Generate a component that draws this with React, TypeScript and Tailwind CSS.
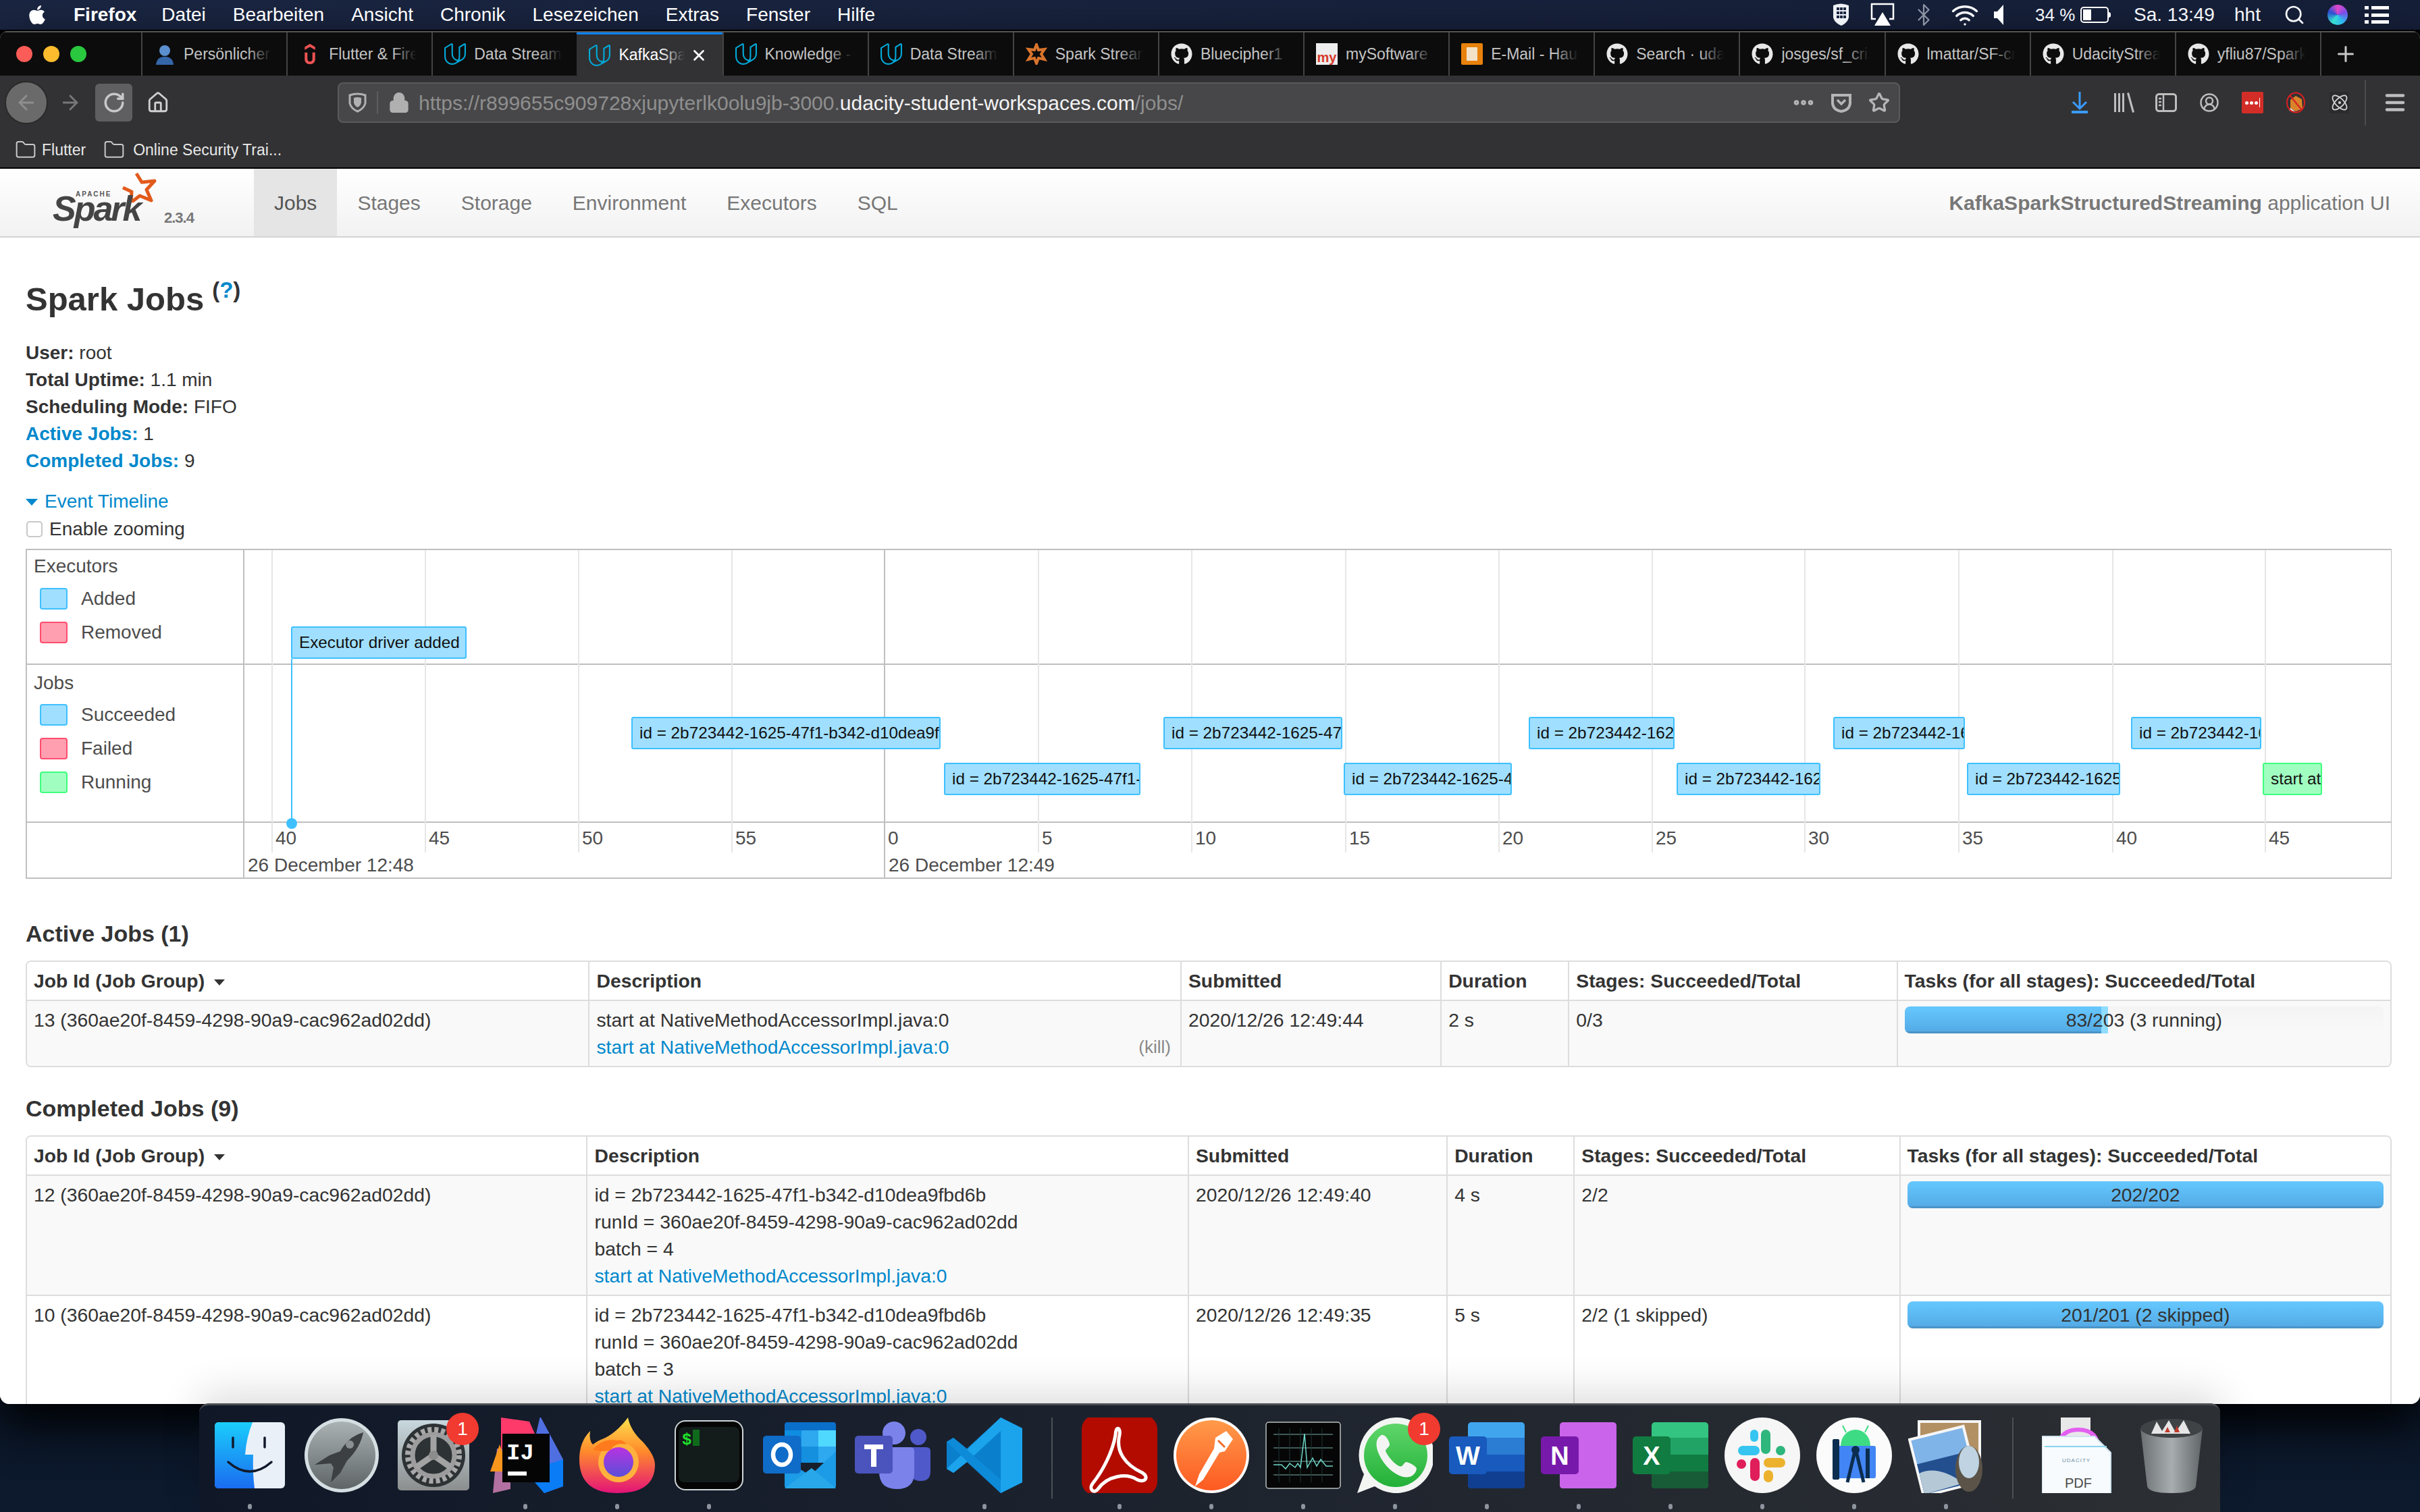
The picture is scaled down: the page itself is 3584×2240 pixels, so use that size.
import { ReactNode } from 'react'
import {
  ArrowLeft,
  ArrowRight,
  Atom,
  Bluetooth,
  CircleUserRound,
  Ellipsis,
  Folder,
  Home,
  Lock,
  Menu,
  Plus,
  RotateCw,
  Search,
  Star,
  Wifi,
  X,
} from 'lucide-react'
import { FaApple, FaGithub } from 'react-icons/fa'
import { SiUdacity, SiUdemy } from 'react-icons/si'

const sans = "font-['Liberation_Sans',Arial,sans-serif]"

const menus = ['Datei', 'Bearbeiten', 'Ansicht', 'Chronik', 'Lesezeichen', 'Extras', 'Fenster', 'Hilfe']

function Favicon({ kind }: { kind: string }) {
  if (kind === 'udacity') return <SiUdacity size={32} className="text-[#02a9d8]" />
  if (kind === 'github') return <FaGithub size={32} className="text-[#e8e8e8]" />
  if (kind === 'udemy') return <SiUdemy size={30} className="text-[#ec5252]" />
  if (kind === 'person')
    return (
      <svg viewBox="0 0 32 32" className="h-8 w-8">
        <circle cx="16" cy="11" r="8" fill="#5b8fd0" />
        <path d="M3 32c1-10 7-12 13-12s12 2 13 12z" fill="#3566a8" />
      </svg>
    )
  if (kind === 'spark')
    return (
      <svg viewBox="0 0 32 32" className="h-8 w-8">
        <path d="M16 2l3 8 9-1-5 7 5 8-9-2-3 8-3-8-9 2 5-8-5-7 9 1z" fill="none" stroke="#d9742c" strokeWidth="4" />
      </svg>
    )
  if (kind === 'my')
    return (
      <div className="flex h-8 w-8 flex-col items-center justify-end bg-[#eeeeee] text-[20px] leading-[22px] font-bold text-[#d63a2a]">
        my
      </div>
    )
  return (
    <div className="flex h-8 w-8 items-center justify-center rounded-[2px] bg-[#e8820c]">
      <div className="h-5 w-4 bg-[#f3e2c8]" />
    </div>
  )
}

const tabs = [
  { kind: 'person', label: 'Persönlicher Bereich' },
  { kind: 'udemy', label: 'Flutter & Firebase' },
  { kind: 'udacity', label: 'Data Streaming' },
  { kind: 'udacity', label: 'KafkaSpark', active: true },
  { kind: 'udacity', label: 'Knowledge - Udacity' },
  { kind: 'udacity', label: 'Data Streaming' },
  { kind: 'spark', label: 'Spark Streaming' },
  { kind: 'github', label: 'Bluecipher1 (Blue' },
  { kind: 'my', label: 'mySoftware' },
  { kind: 'mail', label: 'E-Mail - Hauptkonto' },
  { kind: 'github', label: 'Search · udacity' },
  { kind: 'github', label: 'josges/sf_crime' },
  { kind: 'github', label: 'lmattar/SF-crime' },
  { kind: 'github', label: 'UdacityStreaming' },
  { kind: 'github', label: 'yfliu87/Spark' },
]

function MenuBar() {
  return (
    <div className={`flex h-[44px] items-center bg-gradient-to-r from-[#1a2541] to-[#151f38] text-[28px] text-white ${sans}`}>
      <FaApple size={32} className="ml-[39px]" />
      <span className="ml-[38px] font-bold">Firefox</span>
      <div className="ml-[37px] flex gap-[40px]">
        {menus.map((m) => (
          <span key={m}>{m}</span>
        ))}
      </div>
      <div className="ml-auto flex items-center pr-[46px] text-[#f4f6fa]">
        <svg viewBox="0 0 29 34" className="h-[34px] w-[29px]">
          <path d="M3 3q11-5 23 0v18q-2 8-11 12-10-4-12-12z" fill="#eef1f6" />
          <path d="M8 6h4v4H8zm5 0h4v4h-4zm5 0h4v4h-4zM8 12h4v4H8zm5 0h4v4h-4zm5 0h4v4h-4zM8 18h4v4H8zm5 0h4v4h-4zm5 0h4v4h-4z" fill="#1a2541" />
        </svg>
        <svg viewBox="0 0 36 36" className="ml-[29px] h-[36px] w-[36px]" fill="none">
          <path d="M8 24H2V2h32v22h-6" stroke="#fff" strokeWidth="2.5" />
          <path d="M18 14l12 20H6z" fill="#fff" />
        </svg>
        <Bluetooth size={36} strokeWidth={1.5} className="ml-[25px] text-[#8d93a3]" />
        <Wifi size={42} strokeWidth={2} className="ml-[22px]" />
        <svg viewBox="0 0 14 30" className="ml-[22px] h-[30px] w-[14px]">
          <path d="M0 10h5l9-10v30L5 20H0z" fill="#fff" />
        </svg>
        <span className="ml-[47px] w-[56px] whitespace-nowrap text-[26px]">34 %</span>
        <div className="ml-[11px] flex h-[24px] w-[42px] items-center rounded-[5px] border-2 border-white p-[2px]">
          <div className="h-full w-[12px] bg-white" />
        </div>
        <div className="h-[8px] w-[3px] rounded-r bg-white" />
        <span className="ml-[34px] w-[122px] whitespace-nowrap">Sa. 13:49</span>
        <span className="ml-[27px] w-[43px]">hht</span>
        <Search size={32} strokeWidth={2} className="ml-[30px]" />
        <div className="ml-[33px] h-[30px] w-[30px] rounded-full bg-[conic-gradient(#e547c8,#7a4de8,#2fb8f0,#38e0d0,#2a4fd0,#e547c8)]" />
        <div className="ml-[25px] flex h-[26px] w-[36px] flex-col justify-between">
          <div className="h-[5px] w-full border-l-[6px] border-white bg-[linear-gradient(90deg,transparent_4px,#fff_4px)]" />
          <div className="h-[5px] w-full border-l-[6px] border-white bg-[linear-gradient(90deg,transparent_4px,#fff_4px)]" />
          <div className="h-[5px] w-full border-l-[6px] border-white bg-[linear-gradient(90deg,transparent_4px,#fff_4px)]" />
        </div>
      </div>
    </div>
  )
}

function TabBar() {
  return (
    <div className={`flex h-[66px] border-t-2 border-[#555555] bg-[#0c0c0c] text-[23px] text-[#c4c4c4] ${sans}`}>
      <div className="flex w-[209px] items-center gap-[16px] pl-[24px]">
        <div className="h-[24px] w-[24px] rounded-full bg-[#fc5c57]" />
        <div className="h-[24px] w-[24px] rounded-full bg-[#fdbc2e]" />
        <div className="h-[24px] w-[24px] rounded-full bg-[#29c83f]" />
      </div>
      {tabs.map((t, i) => (
        <div
          key={i}
          className={
            t.active
              ? 'relative flex w-[215.13px] items-center border-t-[3px] border-[#0a84ff] bg-[#323234] pr-[22px] pl-[18px] text-white'
              : 'flex w-[215.13px] items-center border-l-2 border-[#444444] pr-[22px] pl-[17px]'
          }
        >
          <div className="flex h-8 w-8 shrink-0 items-center justify-center">
            <Favicon kind={t.kind} />
          </div>
          <div className="relative ml-[12px] flex-1 overflow-hidden whitespace-nowrap">
            {t.label}
            <div
              className={
                t.active
                  ? 'absolute inset-y-0 right-0 w-[36px] bg-gradient-to-r from-transparent to-[#323234]'
                  : 'absolute inset-y-0 right-0 w-[36px] bg-gradient-to-r from-transparent to-[#0c0c0c]'
              }
            />
          </div>
          {t.active && <X size={26} strokeWidth={2.5} className="ml-[8px] shrink-0" />}
        </div>
      ))}
      <div className="flex flex-1 items-center border-l-2 border-[#444444] pl-[18px]">
        <Plus size={36} strokeWidth={2} className="text-[#c8c8c8]" />
      </div>
    </div>
  )
}

function Toolbar() {
  return (
    <div className={`flex h-[136px] flex-col bg-[#323234] text-[#b5b5b5] ${sans}`}>
      <div className="flex h-[80px] items-center">
        <div className="ml-[7px] flex h-[64px] w-[64px] items-center justify-center rounded-full border-2 border-[#2a2a2a] bg-[#6a6a6a]">
          <ArrowLeft size={34} strokeWidth={2} className="text-[#8e8e8e]" />
        </div>
        <ArrowRight size={34} strokeWidth={2} className="ml-[16px] text-[#777777]" />
        <div className="ml-[20px] flex h-[56px] w-[55px] items-center justify-center rounded-[6px] bg-[#5f5f61]">
          <RotateCw size={34} strokeWidth={2.5} className="text-[#c8c8c8]" />
        </div>
        <Home size={34} strokeWidth={2} className="ml-[21px] text-[#d0d0d0]" />
        <div className="ml-[249px] flex h-[60px] w-[2314px] items-center rounded-[8px] border-2 border-[#5a5a5c] bg-[#474749]">
          <svg viewBox="0 0 27 30" className="ml-[14px] h-[30px] w-[27px]" fill="none">
            <path d="M2 4q11-4 23 0v12q-2 8-11.500 12Q4 24 2 16z" stroke="#b0b0b0" strokeWidth="3" />
            <path d="M8 8q5-2 11 0v7q-1 5-5.500 7-4.500-2-5.500-7z" fill="#b0b0b0" />
          </svg>
          <div className="ml-[15px] h-[34px] w-[2px] bg-[#5c5c5e]" />
          <Lock size={32} strokeWidth={2.5} fill="#b0b0b0" className="ml-[15px] text-[#b0b0b0]" />
          <div className="ml-[13px] whitespace-nowrap text-[30px] text-[#8f8f8f]">
            https://r899655c909728xjupyterlk0olu9jb-3000.<span className="text-[#f4f4f4]">udacity-student-workspaces.com</span>/jobs/
          </div>
          <Ellipsis size={36} strokeWidth={3} className="ml-auto text-[#b5b5b5]" />
          <svg viewBox="0 0 32 32" className="ml-[22px] h-[32px] w-[32px]" fill="none">
            <path d="M3 5h26v12q-1 10-13 12Q4 27 3 17z" stroke="#b5b5b5" strokeWidth="4" />
            <path d="M10 12l6 6 6-6" stroke="#b5b5b5" strokeWidth="3.500" />
          </svg>
          <Star size={32} strokeWidth={2.5} className="mr-[13px] ml-[24px] text-[#b5b5b5]" />
        </div>
        <svg viewBox="0 0 24 32" className="ml-[254px] h-[32px] w-[24px]" fill="none">
          <path d="M12 0v24M2 15l10 10 10-10" stroke="#3a9bff" strokeWidth="3" />
          <path d="M0 30h24" stroke="#3a9bff" strokeWidth="4" />
        </svg>
        <svg viewBox="0 0 31 30" className="ml-[38px] h-[30px] w-[31px]" fill="#bdbdbd">
          <path d="M1 1h3v28H1zm6 0h3v28H7zm6 0h3v28h-3zm7 0l3-1 8 29-3 1z" />
        </svg>
        <svg viewBox="0 0 32 28" className="ml-[31px] h-[28px] w-[32px]" fill="none">
          <rect x="1.500" y="1.500" width="29" height="25" rx="4" stroke="#bdbdbd" strokeWidth="3" />
          <path d="M12 2v24" stroke="#bdbdbd" strokeWidth="2.500" />
          <path d="M5 8h4M5 13h4M5 18h4" stroke="#bdbdbd" strokeWidth="2.500" />
        </svg>
        <CircleUserRound size={30} strokeWidth={2} className="ml-[33px] text-[#bdbdbd]" />
        <div className="ml-[33px] flex h-[32px] w-[32px] items-center justify-center gap-[2px] rounded-[2px] bg-[#d32d27]">
          <div className="h-[5px] w-[5px] rounded-full bg-white" />
          <div className="h-[5px] w-[5px] rounded-full bg-white" />
          <div className="h-[5px] w-[5px] rounded-full bg-white" />
          <div className="h-[14px] w-[1px] bg-white" />
        </div>
        <svg viewBox="0 0 30 32" className="ml-[33px] h-[32px] w-[30px]">
          <path d="M7 12l8-6 9 5 1 14-10 4-8-5z" fill="#d9832a" />
          <path d="M7 24l7 5-9-1z" fill="#f3f3f3" />
          <ellipse cx="15" cy="16" rx="13" ry="14.500" fill="none" stroke="#d82020" strokeWidth="2" />
          <path d="M6 5l18 22" stroke="#d82020" strokeWidth="2" />
        </svg>
        <div className="ml-[35px] flex h-[32px] w-[29px] items-center justify-center bg-[#2b2b2d]">
          <Atom size={28} strokeWidth={1.5} className="text-[#d8d8d8]" />
        </div>
        <div className="ml-[23px] h-[68px] w-[2px] bg-[#4c4c4e]" />
        <Menu size={36} strokeWidth={3} className="ml-[25px] text-[#bdbdbd]" />
      </div>
      <div className="flex h-[56px] items-center pt-[4px] text-[23px] text-[#e8e8e8]">
        <Folder size={32} strokeWidth={1.5} className="ml-[22px] text-[#c8c8c8]" />
        <span className="ml-[8px]">Flutter</span>
        <Folder size={32} strokeWidth={1.5} className="ml-[26px] text-[#c8c8c8]" />
        <span className="ml-[12px] whitespace-nowrap">Online Security Trai...</span>
      </div>
    </div>
  )
}

function NavBar() {
  return (
    <div className={`flex h-[104px] border-t-2 border-b-2 border-t-black border-b-[#d4d4d4] bg-gradient-to-b from-white to-[#f2f2f2] text-[30px] text-[#777777] ${sans}`}>
      <div className="relative w-[376px]">
        <svg viewBox="0 0 56 46" className="absolute top-[4px] left-[176px] h-[46px] w-[56px]" fill="none">
          <path d="M26 3l8 13 19-2-12 13 7 16-17-7-13 10 1-16L6 24" stroke="#e25a1c" strokeWidth="5" strokeLinejoin="round" />
        </svg>
        <span className="absolute top-[30px] left-[112px] text-[10px] font-bold tracking-[2px] text-[#555555]">APACHE</span>
        <span className="absolute top-[33px] left-[78px] text-[52px] leading-[52px] font-bold tracking-[-3px] text-[#444444] italic">Spark</span>
        <span className="absolute top-[56px] left-[243px] text-[22px] font-bold tracking-[-1px] text-[#777777]">2.3.4</span>
      </div>
      {['Jobs', 'Stages', 'Storage', 'Environment', 'Executors', 'SQL'].map((n) => (
        <div
          key={n}
          className={
            n === 'Jobs'
              ? 'flex items-center bg-[#e5e5e5] px-[30px] text-[#555555]'
              : 'flex items-center px-[30px]'
          }
        >
          {n}
        </div>
      ))}
      <div className="ml-auto flex items-center pr-[44px] whitespace-nowrap">
        <span className="font-bold">KafkaSparkStructuredStreaming</span>&nbsp;application UI
      </div>
    </div>
  )
}

const longId = 'id = 2b723442-1625-47f1-b342-d10dea9fbd6b'

const timelineItems = [
  { left: 573, top: 247, width: 458 },
  { left: 1036, top: 315, width: 291 },
  { left: 1361, top: 247, width: 265 },
  { left: 1628, top: 315, width: 249 },
  { left: 1902, top: 247, width: 216 },
  { left: 2121, top: 315, width: 213 },
  { left: 2353, top: 247, width: 195 },
  { left: 2551, top: 315, width: 227 },
  { left: 2794, top: 247, width: 193 },
]

const ticks = [
  { x: 40, t: '40' },
  { x: 267, t: '45' },
  { x: 494, t: '50' },
  { x: 721, t: '55' },
  { x: 947, t: '0', major: true },
  { x: 1175, t: '5' },
  { x: 1402, t: '10' },
  { x: 1630, t: '15' },
  { x: 1857, t: '20' },
  { x: 2084, t: '25' },
  { x: 2310, t: '30' },
  { x: 2538, t: '35' },
  { x: 2766, t: '40' },
  { x: 2992, t: '45' },
]

function Legend({ color, label }: { color: string; label: string }) {
  return (
    <div className="ml-[19px] flex h-[32px] items-center gap-[20px]">
      <div className={`h-[32px] w-[41px] rounded-[4px] border-2 ${color}`} />
      <span>{label}</span>
    </div>
  )
}

function Timeline() {
  return (
    <div className="relative mt-[9px] flex h-[489px] flex-col border-2 border-r-[1px] border-[#bfbfbf] text-[28px] leading-[40px] text-[#4d4d4d]">
      <div className="flex h-[170px] border-b-2 border-[#bfbfbf]">
        <div className="flex w-[322px] flex-col gap-[18px] border-r-2 border-[#bfbfbf] pt-[4px]">
          <div className="-mb-[6px] pl-[10px]">Executors</div>
          <Legend color="border-[#3ec0ff] bg-[#a0dfff]" label="Added" />
          <Legend color="border-[#ff4d6d] bg-[#ff9fb0]" label="Removed" />
        </div>
      </div>
      <div className="flex h-[234px] border-b-2 border-[#bfbfbf]">
        <div className="flex w-[322px] flex-col gap-[18px] border-r-2 border-[#bfbfbf] pt-[7px]">
          <div className="-mb-[7px] pl-[10px]">Jobs</div>
          <Legend color="border-[#3ec0ff] bg-[#a0dfff]" label="Succeeded" />
          <Legend color="border-[#ff4d6d] bg-[#ff9fb0]" label="Failed" />
          <Legend color="border-[#3dff7e] bg-[#a0ffc0]" label="Running" />
        </div>
      </div>
      <div className="flex flex-1">
        <div className="w-[322px] border-r-2 border-[#bfbfbf]" />
      </div>

      <div className="absolute inset-y-0 right-0 left-[322px]">
        {ticks.map((k) => (
          <div key={k.x}>
            <div
              className={k.major ? 'absolute top-0 h-[485px] w-[2px] bg-[#bfbfbf]' : 'absolute top-0 h-[448px] w-[2px] bg-[#e6e6e6]'}
              style={{ left: k.x }}
            />
            <div className="absolute top-[407px]" style={{ left: k.x + 6 }}>
              {k.t}
            </div>
          </div>
        ))}
        <div className="absolute top-[447px] left-[5px] whitespace-nowrap">26 December 12:48</div>
        <div className="absolute top-[447px] left-[954px] whitespace-nowrap">26 December 12:49</div>

        <div className="absolute top-[161px] left-[69px] h-[244px] w-[2px] bg-[#3ec0ff]" />
        <div className="absolute top-[397px] left-[62px] h-[16px] w-[16px] rounded-full bg-[#3ec0ff]" />
        <div className="absolute top-[113px] left-[69px] flex h-[48px] w-[260px] items-center overflow-hidden rounded-[3px] border-2 border-[#3ec0ff] bg-[#a0dfff] pl-[10px] text-[24.3px] whitespace-nowrap text-[#111111]">
          Executor driver added
        </div>
        {timelineItems.map((it) => (
          <div
            key={it.left}
            className="absolute flex h-[48px] items-center overflow-hidden rounded-[3px] border-2 border-[#3ec0ff] bg-[#a0dfff] pl-[10px] text-[24.3px] whitespace-nowrap text-[#111111]"
            style={{ left: it.left, top: it.top, width: it.width }}
          >
            {longId}
          </div>
        ))}
        <div className="absolute top-[315px] left-[2989px] flex h-[48px] w-[88px] items-center overflow-hidden rounded-[3px] border-2 border-[#3dff7e] bg-[#a0ffc0] pl-[10px] text-[24.3px] whitespace-nowrap text-[#111111]">
          start at
        </div>
      </div>
    </div>
  )
}

function Bar({ label, width, done = 100, running = 0 }: { label: string; width: number; done?: number; running?: number }) {
  return (
    <div className="relative h-[40px] overflow-hidden rounded-[8px] bg-gradient-to-b from-[#f4f4f4] to-[#f9f9f9] text-center text-[#333333]">
      <div className="absolute inset-y-0 left-0 flex">
        <div className="h-full border-b-[3px] border-[#4a94c8] bg-gradient-to-b from-[#66c8ff] to-[#54abe6]" style={{ width: (width * done) / 100 }} />
        <div className="h-full bg-[#8fdcff]" style={{ width: running }} />
      </div>
      <span className="relative">{label}</span>
    </div>
  )
}

function JobsTable({ widths, rows }: { widths: number[]; rows: { id: string; desc: ReactNode; sub: string; dur: string; stages: string; tasks: ReactNode }[] }) {
  const heads = ['Description', 'Submitted', 'Duration', 'Stages: Succeeded/Total', 'Tasks (for all stages): Succeeded/Total']
  return (
    <div className="overflow-hidden rounded-[8px] border-2 border-[#dddddd]">
      <table className="w-full table-fixed border-separate border-spacing-0 text-left text-[28.3px] leading-[40px] text-[#333333]">
        <colgroup>
          {widths.map((w, i) => (
            <col key={i} style={{ width: w }} />
          ))}
        </colgroup>
        <thead>
          <tr className="bg-white">
            <th className="px-[10px] py-[8px] font-bold whitespace-nowrap">
              Job Id (Job Group)
              <span className="ml-[14px] inline-block border-x-[8px] border-t-[9px] border-x-transparent border-t-[#333333] align-middle" />
            </th>
            {heads.map((h) => (
              <th key={h} className="border-l-2 border-[#dddddd] px-[10px] py-[8px] font-bold whitespace-nowrap">
                {h}
              </th>
            ))}
          </tr>
        </thead>
        <tbody>
          {rows.map((r, i) => (
            <tr key={r.id} className={i % 2 === 0 ? 'bg-[#f9f9f9]' : 'bg-white'}>
              <td className="border-t-2 border-[#dddddd] px-[10px] py-[8px] align-top whitespace-nowrap">{r.id}</td>
              <td className="border-t-2 border-l-2 border-[#dddddd] px-[10px] py-[8px] align-top whitespace-nowrap">{r.desc}</td>
              <td className="border-t-2 border-l-2 border-[#dddddd] px-[10px] py-[8px] align-top">{r.sub}</td>
              <td className="border-t-2 border-l-2 border-[#dddddd] px-[10px] py-[8px] align-top">{r.dur}</td>
              <td className="border-t-2 border-l-2 border-[#dddddd] px-[10px] py-[8px] align-top">{r.stages}</td>
              <td className="border-t-2 border-l-2 border-[#dddddd] px-[10px] py-[8px] align-top">{r.tasks}</td>
            </tr>
          ))}
        </tbody>
      </table>
    </div>
  )
}

const link = 'text-[#0088cc]'
const startAt = 'start at NativeMethodAccessorImpl.java:0'
const runId = 'runId = 360ae20f-8459-4298-90a9-cac962ad02dd'

function Desc({ batch }: { batch: number }) {
  return (
    <>
      <div>{longId}</div>
      <div>{runId}</div>
      <div>batch = {batch}</div>
      <div className={link}>{startAt}</div>
    </>
  )
}

function Page() {
  return (
    <div className={`bg-white pr-[42px] pl-[38px] text-[28px] leading-[40px] text-[#333333] ${sans}`}>
      <div className="mt-[61px] flex h-[60px] items-start text-[49px] leading-[60px] font-bold">
        Spark Jobs
        <span className="ml-[12px] -mt-[3px] text-[33px] leading-[40px]">
          (<span className={link}>?</span>)
        </span>
      </div>
      <div className="mt-[30px]">
        <div>
          <b>User:</b> root
        </div>
        <div>
          <b>Total Uptime:</b> 1.1 min
        </div>
        <div>
          <b>Scheduling Mode:</b> FIFO
        </div>
        <div>
          <b className={link}>Active Jobs:</b> 1
        </div>
        <div>
          <b className={link}>Completed Jobs:</b> 9
        </div>
      </div>
      <div className={`mt-[20px] flex items-center gap-[10px] ${link}`}>
        <span className="mt-[2px] border-x-[9px] border-t-[10px] border-x-transparent border-t-[#0088cc]" />
        Event Timeline
      </div>
      <div className="mt-[1px] flex items-center gap-[10px]">
        <div className="ml-[1px] h-[24px] w-[24px] rounded-[5px] border-2 border-[#c8c8c8] bg-white" />
        Enable zooming
      </div>
      <Timeline />
      <div className="mt-[61px] text-[34px] font-bold">Active Jobs (1)</div>
      <div className="mt-[20px]">
        <JobsTable
          widths={[831, 876, 385, 189, 486, 731]}
          rows={[
            {
              id: '13 (360ae20f-8459-4298-90a9-cac962ad02dd)',
              desc: (
                <>
                  <div>{startAt}</div>
                  <div className="flex justify-between">
                    <span className={link}>{startAt}</span>
                    <span className="pr-[4px] text-[26px] text-[#888888]">(kill)</span>
                  </div>
                </>
              ),
              sub: '2020/12/26 12:49:44',
              dur: '2 s',
              stages: '0/3',
              tasks: <Bar label="83/203 (3 running)" width={710} done={41.1} running={10} />,
            },
          ]}
        />
      </div>
      <div className="mt-[41px] text-[34px] font-bold">Completed Jobs (9)</div>
      <div className="mt-[20px]">
        <JobsTable
          widths={[828, 890, 383, 188, 482, 727]}
          rows={[
            {
              id: '12 (360ae20f-8459-4298-90a9-cac962ad02dd)',
              desc: <Desc batch={4} />,
              sub: '2020/12/26 12:49:40',
              dur: '4 s',
              stages: '2/2',
              tasks: <Bar label="202/202" width={710} />,
            },
            {
              id: '10 (360ae20f-8459-4298-90a9-cac962ad02dd)',
              desc: <Desc batch={3} />,
              sub: '2020/12/26 12:49:35',
              dur: '5 s',
              stages: '2/2 (1 skipped)',
              tasks: <Bar label="201/201 (2 skipped)" width={710} />,
            },
          ]}
        />
      </div>
    </div>
  )
}

/* dock icons, all on a 112 grid */
function Svg({ children }: { children: ReactNode }) {
  return (
    <svg viewBox="0 0 112 112" className="h-[112px] w-[112px]">
      {children}
    </svg>
  )
}

const FinderIcon = () => (
  <Svg>
    <defs>
      <linearGradient id="fb" x1="0" y1="0" x2="0" y2="1">
        <stop offset="0" stopColor="#1bcdfb" />
        <stop offset="1" stopColor="#1a6cf0" />
      </linearGradient>
    </defs>
    <rect x="4" y="7" width="104" height="98" rx="6" fill="#e9f0f8" />
    <path d="M10 7h50q-9 22-11 48h12q-1 28 2 50H10q-6 0-6-6V13q0-6 6-6z" fill="url(#fb)" />
    <path d="M31 30v14M78 30v14" stroke="#111a2b" strokeWidth="3.500" strokeLinecap="round" />
    <path d="M24 66q32 28 64 0" stroke="#111a2b" strokeWidth="3.500" fill="none" strokeLinecap="round" />
  </Svg>
)

const LaunchpadIcon = () => (
  <Svg>
    <defs>
      <linearGradient id="lp" x1="0" y1="0" x2="0" y2="1">
        <stop offset="0" stopColor="#aab2b4" />
        <stop offset="1" stopColor="#5f6567" />
      </linearGradient>
    </defs>
    <circle cx="56" cy="56" r="55" fill="#d5dfe3" />
    <circle cx="56" cy="56" r="50" fill="url(#lp)" />
    <path d="M88 22q-22 6-34 28L38 56 16 70l24-2 4 6-4 22 14-14 10-18q20-20 24-42z" fill="#3c4042" />
    <circle cx="68" cy="40" r="6" fill="#8b9193" />
  </Svg>
)

const PrefsIcon = () => (
  <Svg>
    <defs>
      <linearGradient id="pf" x1="0" y1="0" x2="0" y2="1">
        <stop offset="0" stopColor="#c8d8de" />
        <stop offset="1" stopColor="#8b8e8e" />
      </linearGradient>
    </defs>
    <rect x="3" y="4" width="106" height="104" rx="5" fill="url(#pf)" />
    <circle cx="56" cy="56" r="47" fill="#2d3235" />
    <circle cx="56" cy="56" r="38" fill="none" stroke="#a8a8a8" strokeWidth="8" strokeDasharray="6 4" />
    <circle cx="56" cy="56" r="31" fill="none" stroke="#9c9c9c" strokeWidth="7" />
    <path d="M56 56V26M56 56L30 74M56 56l26 18" stroke="#a2a2a2" strokeWidth="9" />
    <circle cx="56" cy="56" r="7" fill="#8c8c8c" />
  </Svg>
)

const IntellijIcon = () => (
  <Svg>
    <path d="M20 0l42 6 16 36-58 4z" fill="#fe3a6b" />
    <path d="M78 6l34 64v40L84 120 60 84z" fill="#4f6fe0" transform="translate(0 -8)" />
    <path d="M112 62v40l-28 10-28-32z" fill="#0a7cf5" />
    <path d="M14 46h20v60L8 112z" fill="#b271a0" />
    <path d="M4 80l14-40 14 40z" fill="#f8951d" />
    <rect x="22" y="24" width="70" height="72" fill="#050505" />
    <text x="28" y="62" fill="#fff" fontFamily="'Liberation Mono',monospace" fontWeight="700" fontSize="34">IJ</text>
    <rect x="30" y="80" width="28" height="6" fill="#fff" />
  </Svg>
)

const FirefoxIcon = () => (
  <Svg>
    <defs>
      <linearGradient id="ff" x1="0.5" y1="0" x2="0.5" y2="1">
        <stop offset="0" stopColor="#ffe14d" />
        <stop offset="0.45" stopColor="#ff8a2b" />
        <stop offset="1" stopColor="#e3137a" />
      </linearGradient>
      <linearGradient id="fg" x1="0.5" y1="0" x2="0.5" y2="1">
        <stop offset="0" stopColor="#b833e1" />
        <stop offset="1" stopColor="#5b4fd8" />
      </linearGradient>
    </defs>
    <path d="M72 0q4 20 22 36 18 20 18 34 0 42-56 42Q0 112 0 62 0 36 16 20q-2 14 4 20 8-6 14-8 20-8 38-32z" fill="url(#ff)" />
    <circle cx="58" cy="66" r="30" fill="#ffb13d" />
    <circle cx="58" cy="66" r="22" fill="url(#fg)" />
    <path d="M20 48q14-18 36-14 8-2 14 6-16-4-24 8-10 4-26 0z" fill="#ff7a1d" />
  </Svg>
)

const TerminalIcon = () => (
  <Svg>
    <rect x="5" y="4" width="102" height="104" rx="16" fill="#cfd6d8" />
    <rect x="7" y="6" width="98" height="100" rx="14" fill="#050505" />
    <rect x="11" y="14" width="90" height="82" rx="8" fill="#141b1b" />
    <text x="16" y="40" fill="#1ee32a" fontFamily="'Liberation Mono',monospace" fontWeight="700" fontSize="24">$</text>
    <rect x="32" y="18" width="10" height="24" fill="#0f6b1c" />
  </Svg>
)

const OutlookIcon = () => (
  <Svg>
    <rect x="32" y="7" width="76" height="60" rx="4" fill="#0a6fc9" />
    <rect x="32" y="19" width="25" height="24" fill="#0f8de0" />
    <rect x="57" y="19" width="25" height="24" fill="#2ea8ef" />
    <rect x="82" y="19" width="26" height="24" fill="#50d9ff" />
    <rect x="32" y="43" width="25" height="24" fill="#0a6fc9" />
    <rect x="57" y="43" width="25" height="24" fill="#1490df" />
    <rect x="82" y="43" width="26" height="24" fill="#2ea8ef" />
    <path d="M32 62l38 24 38-36v51q0 4-4 4H36q-4 0-4-4z" fill="#1c9be6" />
    <path d="M32 105l40-30 36 30z" fill="#28a8ea" />
    <rect x="0" y="27" width="56" height="56" rx="5" fill="#0f6cc8" />
    <ellipse cx="28" cy="55" rx="13" ry="15" fill="none" stroke="#fff" strokeWidth="6.500" />
  </Svg>
)

const TeamsIcon = () => (
  <Svg>
    <circle cx="58" cy="23" r="17" fill="#7b83eb" />
    <circle cx="94" cy="29" r="12" fill="#5059c9" />
    <path d="M82 44h24q6 0 6 6v30q0 14-14 14-10 0-14-6z" fill="#5059c9" />
    <path d="M36 44h46q6 0 6 6v32q0 24-26 24-26 0-26-26z" fill="#7b83eb" />
    <rect x="0" y="27" width="56" height="56" rx="5" fill="#4b53bc" />
    <path d="M14 40h28v7H32v26h-8V47H14z" fill="#fff" />
  </Svg>
)

const VsCodeIcon = () => (
  <Svg>
    <path d="M80 0l32 16v80l-32 16-50-46-20 16L0 76V36l10-6 20 16z" fill="#0a7fcb" />
    <path d="M80 0l32 16v80l-32 16V20L30 66 10 82 0 76z" fill="#1ba3ec" />
    <path d="M80 20v72L10 30 0 36 80 112z" fill="#0d8ad8" />
  </Svg>
)

const AcrobatIcon = () => (
  <Svg>
    <rect x="0" y="0" width="112" height="118" rx="20" fill="#b30b00" transform="translate(0 -3)" />
    <path
      d="M56 26c-6 24 8 44 34 56 10 6 4 16-8 10-16-10-44-6-58 14-6 8-14 0-8-8 16-20 30-48 34-72 0-14 8-12 6 0z"
      fill="none"
      stroke="#fff"
      strokeWidth="5"
    />
  </Svg>
)

const PostmanIcon = () => (
  <Svg>
    <defs>
      <linearGradient id="pm" x1="0" y1="0" x2="0" y2="1">
        <stop offset="0" stopColor="#ff9a4a" />
        <stop offset="1" stopColor="#fd5a22" />
      </linearGradient>
    </defs>
    <circle cx="56" cy="56" r="56" fill="#fff" />
    <circle cx="56" cy="56" r="52" fill="url(#pm)" />
    <path d="M62 30l16-10 10 12-12 18-8 2-24 40-12 10 6-18 22-38z" fill="#fff" />
    <path d="M66 34l10 10" stroke="#f26c2c" strokeWidth="3" />
  </Svg>
)

const ActivityIcon = () => (
  <Svg>
    <rect x="1" y="7" width="110" height="98" rx="4" fill="#060606" stroke="#b8c0c0" strokeWidth="1.500" />
    <path d="M12 25h88M12 45h88M12 65h88M12 85h88" stroke="#3e5a58" strokeWidth="2" />
    <path d="M20 16v80M36 16v80M52 16v80M68 16v80M84 16v80" stroke="#1e3432" strokeWidth="1" />
    <path d="M12 70h12l6 6 6-8 8 6 4-6 4 6 6-50 4 50 8-14 6 12 6-10 8 10h10" fill="none" stroke="#6fd8c8" strokeWidth="1.500" />
  </Svg>
)

const WhatsAppIcon = () => (
  <Svg>
    <defs>
      <linearGradient id="wa" x1="0.5" y1="0" x2="0.5" y2="1">
        <stop offset="0" stopColor="#5fd66a" />
        <stop offset="1" stopColor="#22b038" />
      </linearGradient>
    </defs>
    <path d="M56 0a56 56 0 1 1-30 102L0 112l10-28A56 56 0 0 1 56 0z" fill="#f3f5f3" />
    <circle cx="57" cy="56" r="47" fill="url(#wa)" />
    <path d="M36 26c-8 4-10 14-4 28 8 18 22 30 36 34 10 2 18-2 20-12 0-4-12-10-16-10-4 2-4 8-10 6-8-4-16-14-20-22 0-4 6-6 6-10 0-4-6-16-12-14z" fill="#f3f5f3" />
  </Svg>
)

function OfficeIcon({ a, b, c, d, box, letter }: { a: string; b: string; c: string; d: string; box: string; letter: string }) {
  return (
    <Svg>
      <rect x="28" y="7" width="84" height="98" rx="5" fill={a} />
      <rect x="28" y="30" width="84" height="25" fill={b} />
      <rect x="28" y="55" width="84" height="25" fill={c} />
      <path d="M28 80h84v20q0 5-5 5H33q-5 0-5-5z" fill={d} />
      <rect x="0" y="28" width="56" height="56" rx="5" fill={box} />
      <text x="28" y="70" textAnchor="middle" fill="#fff" fontFamily="'Liberation Sans',sans-serif" fontWeight="700" fontSize="38">
        {letter}
      </text>
    </Svg>
  )
}

const SlackIcon = () => (
  <Svg>
    <circle cx="56" cy="56" r="56" fill="#f6f6f6" />
    <rect x="54" y="18" width="14" height="36" rx="7" fill="#2eb67d" />
    <rect x="38" y="18" width="12" height="18" rx="6" fill="#36c5f0" />
    <rect x="20" y="42" width="32" height="14" rx="7" fill="#36c5f0" />
    <rect x="76" y="42" width="14" height="14" rx="7" fill="#2eb67d" />
    <rect x="38" y="60" width="14" height="34" rx="7" fill="#e01e5a" />
    <rect x="18" y="62" width="14" height="14" rx="7" fill="#e01e5a" />
    <rect x="58" y="60" width="32" height="14" rx="7" fill="#ecb22e" />
    <rect x="58" y="78" width="14" height="18" rx="7" fill="#ecb22e" />
  </Svg>
)

const StudioIcon = () => (
  <Svg>
    <circle cx="56" cy="56" r="56" fill="#fbfbfb" />
    <path d="M36 42a22 24 0 0 1 44 0z" fill="#3ddc84" />
    <path d="M44 22l-5-10M72 22l5-10" stroke="#3ddc84" strokeWidth="2" />
    <rect x="26" y="42" width="62" height="48" rx="3" fill="#4285f4" />
    <rect x="24" y="32" width="10" height="60" rx="2" fill="#0b2d4f" />
    <path d="M58 46L46 96M58 46l12 50" stroke="#0b2d4f" strokeWidth="5" />
    <circle cx="58" cy="48" r="6" fill="#0b2d4f" />
    <path d="M76 46v44" stroke="#0b2d4f" strokeWidth="6" />
  </Svg>
)

const PreviewIcon = () => (
  <Svg>
    <rect x="14" y="4" width="94" height="80" fill="#f5f5f5" />
    <rect x="18" y="8" width="86" height="60" fill="#b39063" />
    <g transform="rotate(-14 50 60)">
      <rect x="8" y="20" width="86" height="90" fill="#f6f6f6" />
      <rect x="12" y="24" width="78" height="82" fill="#7fb4e8" />
      <path d="M12 60h78v46H12z" fill="#234f8f" />
      <path d="M12 74q30-6 60 30l-60 2z" fill="#b4c8d6" />
    </g>
    <ellipse cx="90" cy="76" rx="20" ry="34" fill="#5b5348" />
    <ellipse cx="90" cy="66" rx="15" ry="24" fill="#bfd3e2" />
  </Svg>
)

const PdfDocIcon = () => (
  <Svg>
    <rect x="28" y="0" width="44" height="40" fill="#e8e8e8" />
    <path d="M24 50q0-32 30-32 30 0 30 32" fill="none" stroke="#e35ff0" strokeWidth="6" />
    <path d="M0 28h78l24 24v62H0z" fill="#f7fbfd" stroke="#cfe3ee" strokeWidth="2" />
    <rect x="4" y="42" width="92" height="2" fill="#8ad4ee" />
    <text x="30" y="66" fill="#6c8fa3" fontFamily="'Liberation Sans',sans-serif" fontSize="8" letterSpacing="1">UDACITY</text>
    <text x="34" y="104" fill="#4a4a4a" fontFamily="'Liberation Sans',sans-serif" fontSize="20">PDF</text>
  </Svg>
)

const TrashIcon = () => (
  <Svg>
    <defs>
      <linearGradient id="tr" x1="0" y1="0" x2="1" y2="0">
        <stop offset="0" stopColor="#6a6f72" />
        <stop offset="0.5" stopColor="#a8adb0" />
        <stop offset="1" stopColor="#5f6467" />
      </linearGradient>
    </defs>
    <path d="M10 16h92l-10 86q-2 10-36 10t-36-10z" fill="url(#tr)" />
    <ellipse cx="56" cy="16" rx="46" ry="14" fill="#3f4346" />
    <path d="M26 24l8-18 8 14 10-16 10 18 12-18 10 20z" fill="#e6e6e6" />
    <path d="M46 22l4-8 4 8zM60 22l4-10 4 10z" fill="#c0392b" />
  </Svg>
)

const dockLeft = [
  { el: <FinderIcon />, dot: true },
  { el: <LaunchpadIcon /> },
  { el: <PrefsIcon />, badge: true },
  { el: <IntellijIcon />, dot: true },
  { el: <FirefoxIcon />, dot: true },
  { el: <TerminalIcon />, dot: true },
  { el: <OutlookIcon /> },
  { el: <TeamsIcon /> },
  { el: <VsCodeIcon />, dot: true },
]

const dockMid = [
  { el: <AcrobatIcon />, dot: true },
  { el: <PostmanIcon />, dot: true },
  { el: <ActivityIcon />, dot: true },
  { el: <WhatsAppIcon />, dot: true, badge: true },
  { el: <OfficeIcon a="#41a5ee" b="#2b7cd3" c="#185abd" d="#103f91" box="#185abd" letter="W" />, dot: true },
  { el: <OfficeIcon a="#ca64ea" b="#ca64ea" c="#ca64ea" d="#ca64ea" box="#7719aa" letter="N" />, dot: true },
  { el: <OfficeIcon a="#33c481" b="#21a366" c="#107c41" d="#185c37" box="#107c41" letter="X" />, dot: true },
  { el: <SlackIcon />, dot: true },
  { el: <StudioIcon />, dot: true },
  { el: <PreviewIcon />, dot: true },
]

const dockRight = [{ el: <PdfDocIcon /> }, { el: <TrashIcon /> }]

function DockCell({ item }: { item: { el: ReactNode; dot?: boolean; badge?: boolean } }) {
  return (
    <div className="relative flex w-[136px] flex-col items-center">
      {item.el}
      {item.badge && (
        <div className="absolute top-[-7px] left-[87px] flex h-[48px] w-[48px] items-center justify-center rounded-full bg-[#f13a30] text-[28px] text-white">
          1
        </div>
      )}
      {item.dot && <div className="mt-[16px] h-[8px] w-[6px] rounded-full bg-[#8e949e]" />}
    </div>
  )
}

function Dock() {
  return (
    <div className={`absolute top-[2079px] left-[295px] z-10 flex h-[161px] w-[2993px] rounded-t-[14px] border-t-[3px] border-[#4a4d52] bg-gradient-to-r from-[#101828] to-[#2c2f33] pt-[18px] pl-[7px] shadow-[0_-14px_60px_rgba(0,0,0,0.14)] ${sans}`}>
      {dockLeft.map((d, i) => (
        <DockCell key={i} item={d} />
      ))}
      <div className="mx-[31px] h-[120px] w-[2px] bg-[#4c5056]" />
      {dockMid.map((d, i) => (
        <DockCell key={i} item={d} />
      ))}
      <div className="mx-[30px] h-[120px] w-[2px] bg-[#4c5056]" />
      {dockRight.map((d, i) => (
        <DockCell key={i} item={d} />
      ))}
    </div>
  )
}

export default function App() {
  return (
    <div className="relative h-[2240px] w-[3584px] overflow-hidden bg-gradient-to-b from-black to-[#0d1a2e]">
      <MenuBar />
      <div className="mt-[2px] h-[2034px] overflow-hidden rounded-t-[12px] rounded-b-[14px] bg-white shadow-[0_30px_70px_black]">
        <TabBar />
        <Toolbar />
        <NavBar />
        <Page />
      </div>
      <Dock />
    </div>
  )
}
